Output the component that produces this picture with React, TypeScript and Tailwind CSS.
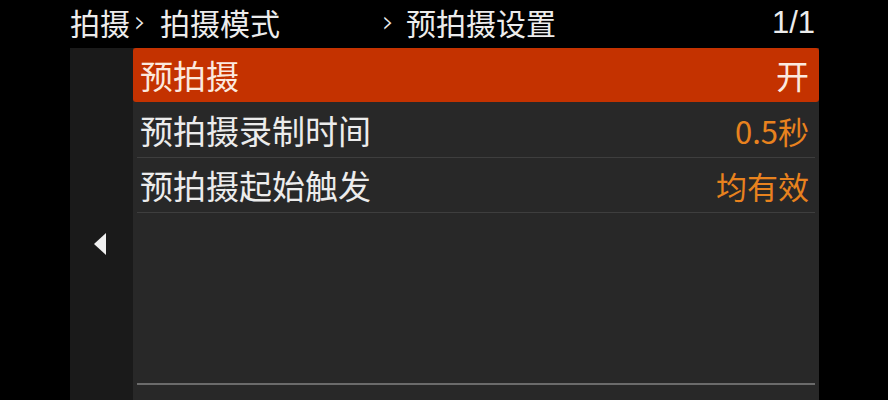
import React from 'react';

const ROWS = [
  { label: '预拍摄', value: '开', selected: true },
  { label: '预拍摄录制时间', value: '0.5秒' },
  { label: '预拍摄起始触发', value: '均有效' },
];

export default function App() {
  return (
    <div
      className="w-[888px] h-[400px] bg-black flex flex-col overflow-hidden text-[#ececec]"
      style={{ fontFamily: '"Noto Sans CJK SC", "Noto Sans", sans-serif' }}
    >
      {/* header / breadcrumb */}
      <div className="h-[48px] flex items-center pl-[70px] w-[819px] text-[30px] leading-none pb-[4px]">
        <div className="flex items-center w-[312px]">
          <span>拍摄</span>
          <span className="ml-[4px] mr-[14px] text-[30px] font-light" style={{ fontFamily: '"DejaVu Sans", sans-serif' }}>›</span>
          <span>拍摄模式</span>
        </div>
        <div className="flex items-center">
          <span className="mr-[12px] text-[30px] font-light" style={{ fontFamily: '"DejaVu Sans", sans-serif' }}>›</span>
          <span>预拍摄设置</span>
        </div>
        <span className="ml-auto mr-[4px] text-[31px]" style={{ fontFamily: '"Liberation Sans", sans-serif' }}>1/1</span>
      </div>

      <div className="flex flex-1 pl-[70px]">
        {/* left side rail */}
        <div className="w-[63px] bg-[#1a1a1a] flex items-center justify-center pt-[40px]">
          <svg width="12" height="22" viewBox="0 0 12 22" className="ml-[-4px]">
            <polygon points="12,0 12,22 0,11" fill="#f0f0f0" />
          </svg>
        </div>

        {/* menu list */}
        <div className="w-[686px] bg-[#282828] flex flex-col">
          {ROWS.map((row) => (
            <div key={row.label} className="flex flex-col">
              <div
                className={`h-[54px] flex items-center justify-between pl-[7px] pr-[10px] text-[33px] leading-none ${
                  row.selected ? 'bg-[#c43200] rounded-[3px] text-[#fbe9df]' : ''
                }`}
              >
                <span>{row.label}</span>
                <span className={row.selected ? '' : 'text-[#e8821e] text-[31px]'}>{row.value}</span>
              </div>
              <div className={`h-[1px] mx-[4px] ${row.selected ? 'bg-transparent' : 'bg-[#3e3e3e]'}`} />
            </div>
          ))}
          <div className="flex-1" />
          <div className="h-[2px] mx-[4px] bg-[#6b6b6b] mb-[15px]" />
        </div>
      </div>
    </div>
  );
}
